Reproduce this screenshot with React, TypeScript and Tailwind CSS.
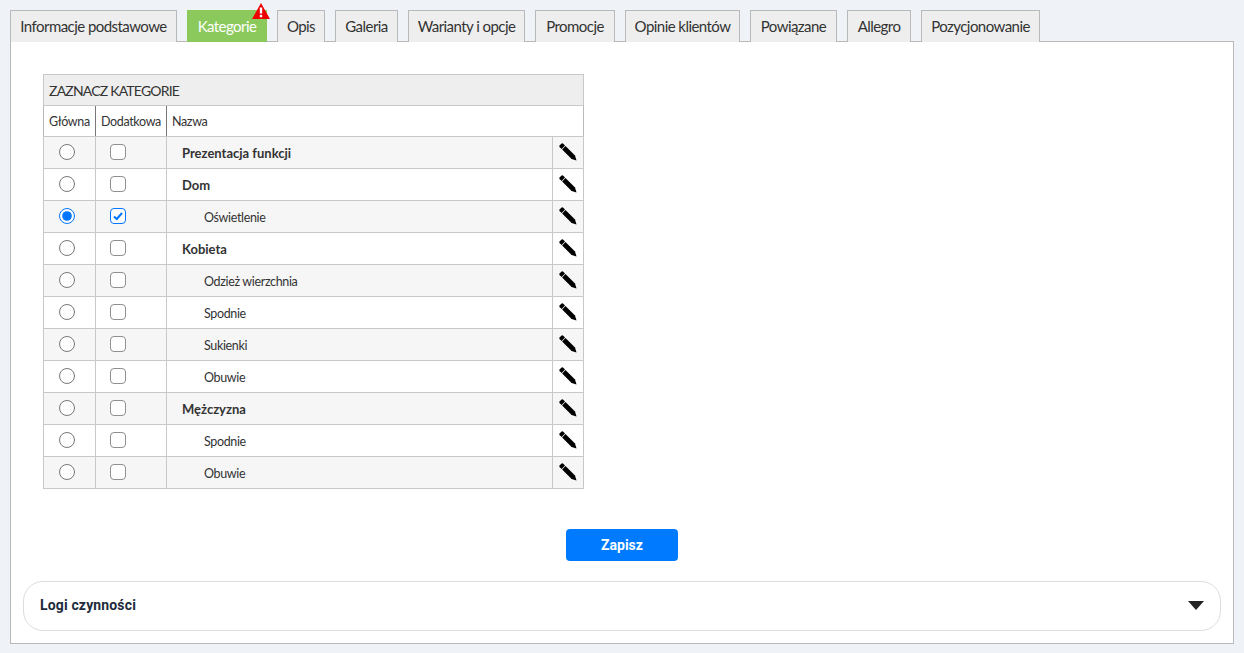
const font = "font-['Lato','Liberation_Sans',sans-serif]";

const tabs = [
  { name: "Informacje podstawowe", w: "w-[167px]" },
  { name: "Kategorie", w: "w-[80px]", active: true },
  { name: "Opis", w: "w-[48px]" },
  { name: "Galeria", w: "w-[63px]" },
  { name: "Warianty i opcje", w: "w-[117px]" },
  { name: "Promocje", w: "w-[80px]" },
  { name: "Opinie klientów", w: "w-[115px]" },
  { name: "Powiązane", w: "w-[87px]" },
  { name: "Allegro", w: "w-[64px]" },
  { name: "Pozycjonowanie", w: "w-[119px]" },
];

const categories = [
  { name: "Prezentacja funkcji", top: true },
  { name: "Dom", top: true },
  { name: "Oświetlenie", checked: true },
  { name: "Kobieta", top: true },
  { name: "Odzież wierzchnia" },
  { name: "Spodnie" },
  { name: "Sukienki" },
  { name: "Obuwie" },
  { name: "Mężczyzna", top: true },
  { name: "Spodnie" },
  { name: "Obuwie" },
];

const Pencil = () => (
  <svg width="18" height="18" viewBox="0 0 18 18" className="ml-[6px] -mt-px block">
    <path d="M2.6 0.5 L0.5 2.6 Q0 3.3 0.5 3.9 L2.6 6 L6 2.6 L3.9 0.5 Q3.3 0 2.6 0.5 Z" fill="#000" />
    <path d="M3.1 6.5 L6.5 3.1 L16 12.6 L17.5 17.5 L12.6 16 Z" fill="#000" />
  </svg>
);

const Warning = () => (
  <svg width="18" height="16" viewBox="0 0 18 16" className="absolute right-[-4px] top-[-8px]">
    <polygon points="9,0 18,16 0,16" fill="#ee0000" />
    <rect x="7.8" y="4.5" width="2.4" height="6" fill="#fff" />
    <rect x="7.8" y="11.8" width="2.4" height="2.4" fill="#fff" />
  </svg>
);

const App = () => {
  return (
    <div className={`h-[653px] w-[1244px] overflow-hidden bg-[#eff3f8] pl-[10px] pt-[10px] ${font}`}>
      <div className="flex h-[32px] gap-[10px]">
        {tabs.map((tab) => (
          <div
            key={tab.name}
            className={`relative flex h-[32px] items-center justify-center border border-b-0 text-[15px] tracking-[-0.55px] ${tab.w} ${
              tab.active
                ? "border-[#8bc95c] bg-[#8bc95c] text-white"
                : "border-[#b9b9b9] bg-[#eeeeee] text-[#333333]"
            }`}
          >
            {tab.name}
            {tab.active && <Warning />}
          </div>
        ))}
      </div>
      <div className="-mt-px h-[603px] w-[1224px] border border-[#b9b9b9] bg-white px-[12px] pt-[32px]">
        <table className="ml-[20px] w-[541px] table-fixed border-collapse border border-[#b9b9b9] text-[12.5px] tracking-[-0.35px] text-[#333333]">
          <colgroup>
            <col className="w-[52px]" />
            <col className="w-[71px]" />
            <col />
            <col className="w-[31px]" />
          </colgroup>
          <thead>
            <tr className="h-[31px] bg-[#eeeeee]">
              <th colSpan={4} className="border border-[#c8c8c8] pl-[5px] text-left text-[14px] font-normal tracking-[-0.8px]">
                ZAZNACZ KATEGORIE
              </th>
            </tr>
            <tr className="h-[31px]">
              <th className="border-y border-r border-y-[#c8c8c8] border-r-[#777777] pl-[5px] pt-[2px] text-left font-normal">Główna</th>
              <th className="border-y border-r border-y-[#c8c8c8] border-r-[#777777] pl-[5px] pt-[2px] text-left font-normal">Dodatkowa</th>
              <th className="border-y border-[#c8c8c8] border-l-[#777777] pl-[5px] pt-[2px] text-left font-normal">Nazwa</th>
              <th className="border-y border-[#c8c8c8]" />
            </tr>
          </thead>
          <tbody>
            {categories.map((cat, i) => (
              <tr key={i} className={`h-[32px] ${i % 2 === 0 ? "bg-[#f6f6f6]" : "bg-white"}`}>
                <td className="border border-[#c8c8c8]">
                  <input type="radio" readOnly checked={!!cat.checked} className="ml-[15px] -mt-px block h-4 w-4" />
                </td>
                <td className="border border-[#c8c8c8]">
                  <div className="relative ml-[14px] -mt-[2px] h-4 w-4">
                    <input
                      type="checkbox"
                      readOnly
                      checked={!!cat.checked}
                      className="block h-4 w-4 appearance-none rounded-[4px] border border-[#8f8f8f] bg-white checked:border-[#0075ff]"
                    />
                    {cat.checked && (
                      <svg viewBox="0 0 16 16" className="absolute left-0 top-0 h-4 w-4">
                        <path d="M4 8.5 L6.8 11 L12 5" fill="none" stroke="#0075ff" strokeWidth="2" />
                      </svg>
                    )}
                  </div>
                </td>
                <td className={`border border-[#c8c8c8] ${cat.top ? "pl-[15px] pt-[2px] text-[13px] font-bold tracking-normal" : "pl-[37px] pt-[4px]"}`}>
                  {cat.name}
                </td>
                <td className="border border-[#c8c8c8]">
                  <Pencil />
                </td>
              </tr>
            ))}
          </tbody>
        </table>
        <div className="mt-[40px] flex justify-center">
          <button className="h-[32px] w-[112px] rounded-[4px] bg-[#007bff] font-['Roboto',sans-serif] text-[14px] font-bold text-white">
            Zapisz
          </button>
        </div>
        <div className="mt-[20px] flex h-[50px] w-[1198px] items-center justify-between rounded-[20px] border border-[#dddddd] pb-[2px] pl-[16px] pr-[16px] font-['Roboto',sans-serif] text-[14px] font-bold tracking-[0.15px] text-[#212b3d]">
          Logi czynności
          <div className="h-0 w-0 border-x-[8px] border-t-[9px] border-x-transparent border-t-[#222222]" />
        </div>
      </div>
    </div>
  );
};

export default App;
